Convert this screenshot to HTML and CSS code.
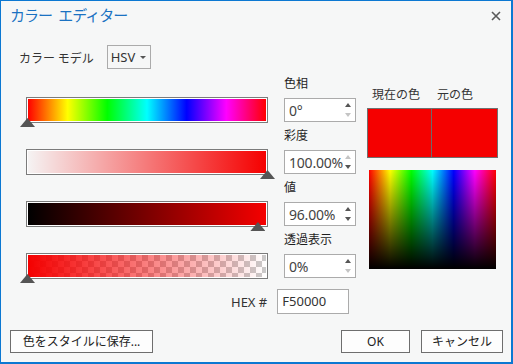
FILE: index.html
```html
<!DOCTYPE html>
<html lang="ja">
<head>
<meta charset="utf-8">
<title>カラー エディター</title>
<link rel="stylesheet" href="styles.css">
</head>
<body>
<div class="dialog">
  <div class="titlebar">
    <span class="title">カラー エディター</span>
    <span class="close"><svg width="10" height="10" viewBox="0 0 10 10"><path d="M1 1L9 9M9 1L1 9" stroke="#5a5a5a" stroke-width="1.6" fill="none"/></svg></span>
  </div>
  <div class="model-row">
    <span class="model-label">カラー モデル</span>
    <div class="select"><span>HSV</span><span class="caret"></span></div>
  </div>
  <div class="main">
    <div class="sliders">
      <div class="slider"><div class="track"><div class="fill hue"></div></div><span class="thumb" style="--p:0"></span></div>
      <div class="slider"><div class="track"><div class="fill sat"></div></div><span class="thumb" style="--p:1"></span></div>
      <div class="slider"><div class="track"><div class="fill val"></div></div><span class="thumb" style="--p:0.96"></span></div>
      <div class="slider"><div class="track"><div class="fill alpha"></div></div><span class="thumb" style="--p:0"></span></div>
    </div>
    <div class="fields">
      <div class="field">
        <div class="flabel">色相</div>
        <div class="spin"><span class="val-text">0°</span><span class="arrows"><i class="up"></i><i class="down dis"></i></span></div>
      </div>
      <div class="field">
        <div class="flabel">彩度</div>
        <div class="spin"><span class="val-text">100.00%</span><span class="arrows"><i class="up dis"></i><i class="down"></i></span></div>
      </div>
      <div class="field">
        <div class="flabel">値</div>
        <div class="spin"><span class="val-text">96.00%</span><span class="arrows"><i class="up"></i><i class="down"></i></span></div>
      </div>
      <div class="field">
        <div class="flabel">透過表示</div>
        <div class="spin"><span class="val-text">0%</span><span class="arrows"><i class="up"></i><i class="down dis"></i></span></div>
      </div>
    </div>
    <div class="preview">
      <div class="plabels"><span>現在の色</span><span>元の色</span></div>
      <div class="swatches"><div class="sw current"></div><div class="sw original"></div></div>
      <div class="spectrum"></div>
    </div>
  </div>
  <div class="hex-row">
    <span class="hex-label">HEX #</span>
    <div class="hex">F50000</div>
  </div>
  <div class="footer">
    <button class="btn save">色をスタイルに保存...</button>
    <div class="footer-right">
      <button class="btn ok">OK</button>
      <button class="btn cancel">キャンセル</button>
    </div>
  </div>
</div>
</body>
</html>
```

FILE: styles.css
```css
* { box-sizing: border-box; }
html, body { margin: 0; padding: 0; }
body {
  font-family: "Noto Sans", "Noto Sans CJK JP", sans-serif;
  font-size: 12px;
  color: #1e1e1e;
  background: #f6f7f7;
}
.dialog {
  width: 513px;
  height: 364px;
  border: 1px solid #0c78d2;
  border-right-width: 2px;
  border-bottom-width: 2px;
  background: #f6f7f7;
  display: flex;
  flex-direction: column;
}
.titlebar {
  height: 28px;
  display: flex;
  align-items: center;
  justify-content: space-between;
  padding: 0 10px 0 9px;
}
.title {
  font-family: "Noto Sans CJK JP", sans-serif;
  font-size: 15px;
  letter-spacing: -1px;
  word-spacing: 4px;
  color: #1b72c2;
  line-height: 28px;
}
.close { display: flex; width: 10px; height: 10px; margin-top: 1px; }
.model-row {
  margin-top: 16px;
  padding-left: 18px;
  display: flex;
  align-items: center;
  gap: 13px;
  height: 24px;
}
.model-label { font-family: "Noto Sans CJK JP", sans-serif; font-size: 12px; color: #333; }
.select {
  width: 44px;
  height: 24px;
  border: 1px solid #ababab;
  display: flex;
  align-items: center;
  padding-left: 3px;
  gap: 5px;
  font-size: 13px;
  color: #333;
}
.caret {
  width: 0; height: 0;
  border-left: 3px solid transparent;
  border-right: 3px solid transparent;
  border-top: 3px solid #555;
  margin-top: 1px;
}
.main {
  margin-top: 6px;
  padding-left: 19px;
  display: flex;
  align-items: flex-start;
}
.sliders {
  width: 256px;
  padding-top: 22px;
  display: flex;
  flex-direction: column;
  gap: 26px;
}
.slider { position: relative; height: 26px; }
.track {
  margin-left: 6px;
  width: 242px;
  height: 26px;
  border: 1px solid #7b7b7b;
  padding: 1px;
  background: #fff;
}
.fill { height: 100%; }
.hue { background: linear-gradient(to right, #f00, #ff0, #0f0, #0ff, #00f, #f0f, #f00); }
.sat { background: linear-gradient(to right, #f5f3f3, #f50000); }
.val { background: linear-gradient(to right, #000, #f50000); }
.alpha {
  background:
    linear-gradient(to right, rgba(245,0,0,1), rgba(245,0,0,0)),
    conic-gradient(#cacaca 25%, #fff 0 50%, #cacaca 0 75%, #fff 0) 0 0 / 12px 12px;
}
.thumb {
  position: absolute;
  top: 21px;
  left: calc(var(--p) * 240px);
  width: 15px;
  height: 9px;
  background: #555;
  clip-path: polygon(50% 0, 100% 100%, 0 100%);
}
.fields {
  width: 72px;
  margin-left: 8px;
  display: flex;
  flex-direction: column;
  gap: 5px;
}
.flabel {
  font-family: "Noto Sans CJK JP", sans-serif;
  font-size: 12px;
  line-height: 16px;
  margin-bottom: 7px;
  color: #1e1e1e;
  white-space: nowrap;
}
.spin {
  height: 24px;
  border: 1px solid #ababab;
  background: #fff;
  display: flex;
  align-items: center;
}
.val-text {
  flex: 1;
  overflow: hidden;
  white-space: nowrap;
  padding-left: 4px;
  font-size: 14px;
  letter-spacing: -0.2px;
  color: #444;
}
.arrows {
  width: 12px;
  flex: none;
  height: 100%;
  padding: 4px 3px 4px 0;
  display: flex;
  flex-direction: column;
  justify-content: space-between;
  align-items: center;
}
.arrows i { width: 0; height: 0; border-left: 3px solid transparent; border-right: 3px solid transparent; }
.arrows .up { border-bottom: 4px solid #555; }
.arrows .down { border-top: 4px solid #555; }
.arrows .up.dis { border-bottom-color: #c4c4c4; }
.arrows .down.dis { border-top-color: #c4c4c4; }
.preview {
  width: 131px;
  margin-left: 11px;
  padding-top: 11px;
}
.plabels {
  display: grid;
  grid-template-columns: 65px 66px;
  font-family: "Noto Sans CJK JP", sans-serif;
  font-size: 12px;
  line-height: 16px;
  color: #333;
}
.plabels span { padding-left: 5px; white-space: nowrap; }
.swatches {
  margin-top: 6px;
  height: 50px;
  border: 1px solid #707070;
  display: grid;
  grid-template-columns: 64px 1fr;
}
.sw { background: #f50000; }
.sw.current { border-right: 1px solid #6a6a6a; }
.spectrum {
  margin: 12px 2px 0;
  height: 99px;
  background:
    linear-gradient(to bottom, rgba(0,0,0,0), #000),
    linear-gradient(to right, #f00, #ff0, #0f0, #0ff, #00f, #f0f, #f00);
}
.hex-row {
  margin-top: 10px;
  margin-left: 230px;
  display: flex;
  align-items: center;
  gap: 10px;
}
.hex-label { font-size: 13px; color: #333; }
.hex {
  width: 72px;
  height: 25px;
  border: 1px solid #ababab;
  background: #fff;
  padding-left: 4px;
  font-size: 13px;
  line-height: 22px;
  color: #333;
}
.footer {
  margin-top: 16px;
  padding: 0 8px 0 9px;
  display: flex;
  justify-content: space-between;
}
.footer-right { display: flex; gap: 11px; }
.btn {
  height: 23px;
  border: 1px solid #6e6e6e;
  background: #fdfdfd;
  font-family: "Noto Sans", "Noto Sans CJK JP", sans-serif;
  font-size: 12px;
  color: #222;
  padding: 0;
  line-height: 20px;
}
.save { width: 143px; }
.ok { width: 69px; }
.cancel { width: 82px; }
```
